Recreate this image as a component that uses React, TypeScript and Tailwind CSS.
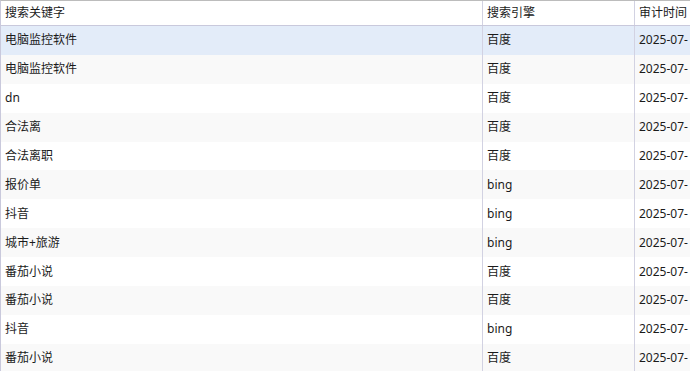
import React from "react";

const rows: [string, string][] = [
  ["电脑监控软件", "百度"],
  ["电脑监控软件", "百度"],
  ["dn", "百度"],
  ["合法离", "百度"],
  ["合法离职", "百度"],
  ["报价单", "bing"],
  ["抖音", "bing"],
  ["城市+旅游", "bing"],
  ["番茄小说", "百度"],
  ["番茄小说", "百度"],
  ["抖音", "bing"],
  ["番茄小说", "百度"],
];

export default function App() {
  return (
    <div
      className="w-[690px] h-[371px] overflow-hidden bg-white text-[12px] text-[#1b1b1b]"
      style={{ fontFamily: '"Noto Sans", "Noto Sans CJK SC", sans-serif' }}
    >
      <div className="border-t border-l border-t-[#bcbcbc] border-l-[#c9c9dc] h-full">
        <div className="flex h-[25px] border-b border-[#c9c9dc] bg-white">
          <div className="w-[482px] pl-[4px] flex items-center border-r border-[#d2d2e2]">搜索关键字</div>
          <div className="w-[152px] pl-[4px] flex items-center border-r border-[#d2d2e2]">搜索引擎</div>
          <div className="flex-1 pl-[4px] flex items-center whitespace-nowrap">审计时间</div>
        </div>
        {rows.map((r, i) => (
          <div
            key={i}
            className={
              "flex h-[28.9px] " +
              (i === 0 ? "bg-[#e3ecf9]" : i % 2 === 1 ? "bg-[#f9f9f9]" : "bg-white")
            }
          >
            <div className="w-[482px] pl-[4px] flex items-center border-r border-[#d2d2e2]">{r[0]}</div>
            <div className="w-[152px] pl-[4px] flex items-center border-r border-[#d2d2e2]">{r[1]}</div>
            <div className="flex-1 pl-[4px] flex items-center whitespace-nowrap overflow-hidden">2025-07-</div>
          </div>
        ))}
      </div>
    </div>
  );
}
